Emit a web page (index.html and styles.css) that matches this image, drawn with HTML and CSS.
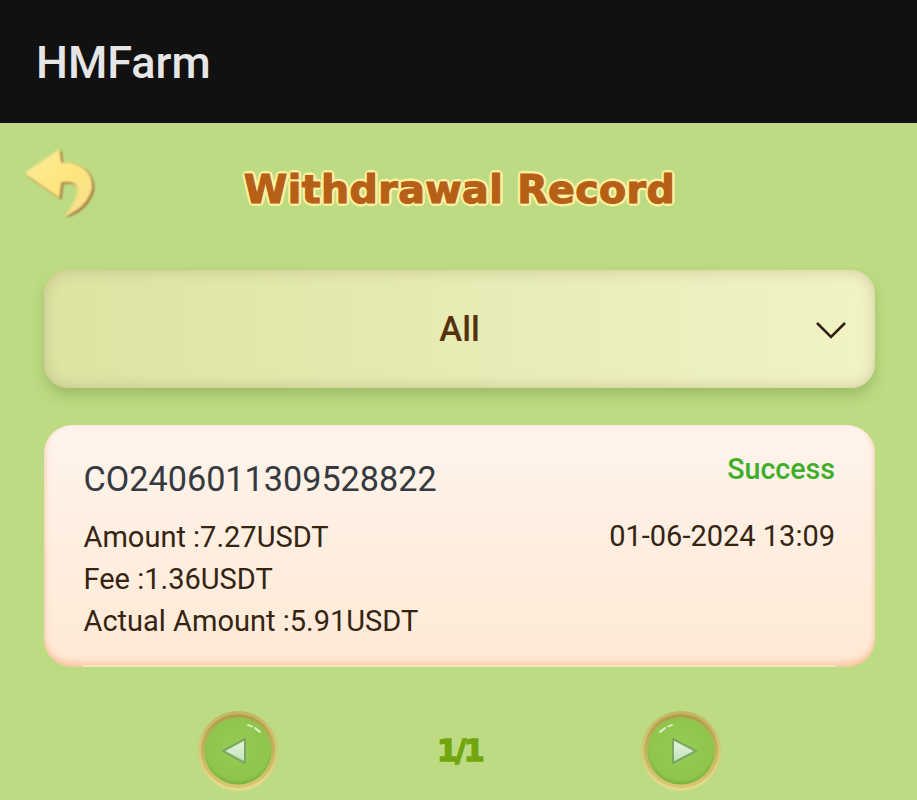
FILE: index.html
```html
<!DOCTYPE html>
<html lang="en">
<head>
<meta charset="utf-8">
<title>HMFarm</title>
<link rel="stylesheet" href="styles.css">
</head>
<body>
<header class="appbar">HMFarm</header>
<main class="page">
  <div class="title-row">
    <svg class="back" viewBox="0 0 72 74" aria-hidden="true">
      <defs>
        <linearGradient id="backFill" x1="0" y1="0" x2="0.8" y2="1">
          <stop offset="0" stop-color="#fdee9e"/>
          <stop offset="0.55" stop-color="#fee57e"/>
          <stop offset="1" stop-color="#f7e08c"/>
        </linearGradient>
        <filter id="soft"><feGaussianBlur stdDeviation="0.9"/></filter>
      </defs>
      <path d="M35 1 L1 24 Q0 26 2 28 L35 51 L37 35 Q50 33 53 40 Q54 52 40 69 Q62 62 68 42 Q70 22 50 16 Q44 14 37 15 Z" fill="#a2733f" transform="translate(2 1.5)" filter="url(#soft)"/>
      <path d="M35 1 L1 24 Q0 26 2 28 L35 51 L37 35 Q50 33 53 40 Q54 52 40 69 Q62 62 68 42 Q70 22 50 16 Q44 14 37 15 Z" fill="url(#backFill)" filter="url(#soft)"/>
    </svg>
    <h1 class="title">Withdrawal Record</h1>
  </div>

  <div class="select">
    <span class="select-label">All</span>
    <svg class="chevron" viewBox="0 0 32 20" aria-hidden="true">
      <path d="M2 3 L16 17 L30 3" fill="none" stroke="#33200f" stroke-width="2.6"/>
    </svg>
  </div>

  <section class="card">
    <div class="card-top">
      <div class="order-id">CO2406011309528822</div>
      <div class="status">Success</div>
    </div>
    <div class="card-bottom">
      <div class="details">
        <div>Amount :7.27USDT</div>
        <div>Fee :1.36USDT</div>
        <div>Actual Amount :5.91USDT</div>
      </div>
      <div class="date">01-06-2024 13:09</div>
    </div>
  </section>

  <nav class="pager">
    <svg class="page-btn" viewBox="0 0 80 80" aria-hidden="true">
      <defs>
        <linearGradient id="ringOuter" x1="0" y1="0" x2="0" y2="1">
          <stop offset="0" stop-color="#c4b562"/>
          <stop offset="1" stop-color="#e6dc8e"/>
        </linearGradient>
        <linearGradient id="ringInner" x1="0" y1="0" x2="0" y2="1">
          <stop offset="0" stop-color="#ad9f48"/>
          <stop offset="1" stop-color="#d8c96f"/>
        </linearGradient>
        <radialGradient id="ball" cx="0.5" cy="0.45" r="0.58">
          <stop offset="0" stop-color="#98ca55"/>
          <stop offset="0.82" stop-color="#8fc54c"/>
          <stop offset="1" stop-color="#6fa838"/>
        </radialGradient>
        <linearGradient id="tri" x1="0" y1="0" x2="0" y2="1">
          <stop offset="0" stop-color="#e8f4d8"/>
          <stop offset="1" stop-color="#bde2c0"/>
        </linearGradient>
      </defs>
      <circle cx="40" cy="40" r="40" fill="url(#ringOuter)"/>
      <circle cx="40" cy="40" r="37" fill="url(#ringInner)"/>
      <circle cx="40" cy="40" r="33.500" fill="url(#ball)"/>
      <path d="M47 28 L47 52 L25 40 Z" fill="url(#tri)" stroke="#7aa860" stroke-width="2" stroke-linejoin="round"/>
      <path d="M50 14 L54 15.500 M57 17 L62 21" stroke="#e6f2cf" stroke-width="1.800" stroke-linecap="round"/>
    </svg>
    <span class="page-count">1/1</span>
    <svg class="page-btn" viewBox="0 0 80 80" aria-hidden="true">
      <circle cx="40" cy="40" r="40" fill="url(#ringOuter)"/>
      <circle cx="40" cy="40" r="37" fill="url(#ringInner)"/>
      <circle cx="40" cy="40" r="33.500" fill="url(#ball)"/>
      <path d="M32 28 L55 40 L32 52 Z" fill="url(#tri)" stroke="#7aa860" stroke-width="2" stroke-linejoin="round"/>
      <path d="M31 14 L27 15.500 M24 17 L19 21" stroke="#e6f2cf" stroke-width="1.800" stroke-linecap="round"/>
    </svg>
  </nav>
</main>
</body>
</html>
```

FILE: styles.css
```css
* { box-sizing: border-box; }
html, body { margin: 0; height: 800px; overflow: hidden; }
body {
  background: #bcdb82;
  font-family: Roboto, "Liberation Sans", sans-serif;
}
.appbar {
  height: 123px;
  background: #111111;
  color: #e6e6e6;
  font-size: 45px;
  font-weight: 500;
  line-height: 126px;
  padding-left: 36px;
}
.page {
  padding: 0 42px 0 44px;
}
.title-row {
  position: relative;
  height: 147px;
  display: flex;
  justify-content: center;
  padding-top: 36px;
}
.back {
  position: absolute;
  left: -19px;
  top: 25px;
  width: 71px;
  height: 73px;
}
.title {
  margin: 0;
  font-family: "DejaVu Sans", sans-serif;
  font-size: 39.5px;
  font-weight: 700;
  line-height: 60px;
  height: 60px;
  letter-spacing: 0.4px;
  color: #b65f17;
  -webkit-text-stroke: 1.2px #b65f17;
  text-shadow: 3px 0 0 #fdf0a0, -3px 0 0 #fdf0a0, 0 3px 0 #fdf0a0, 0 -3px 0 #fdf0a0,
    2.1px 2.1px 0 #fdf0a0, -2.1px 2.1px 0 #fdf0a0, 2.1px -2.1px 0 #fdf0a0, -2.1px -2.1px 0 #fdf0a0;
}
.select {
  position: relative;
  height: 118px;
  border-radius: 24px;
  background: linear-gradient(90deg, #dde3a2 0%, #f2f3c6 100%);
  box-shadow: inset 0 0 14px rgba(170, 160, 110, 0.5), 0 8px 12px rgba(110, 140, 60, 0.35);
  display: flex;
  align-items: center;
  justify-content: center;
}
.select-label {
  color: #54320b;
  font-size: 34.5px;
  font-weight: 500;
  line-height: 114px;
}
.chevron {
  position: absolute;
  right: 28px;
  top: 50px;
  width: 32px;
  height: 20px;
}
.card {
  position: relative;
  margin-top: 37px;
  height: 242px;
  border-radius: 28px;
  background: linear-gradient(180deg, #fff4ec 0%, #ffe9d5 100%);
  box-shadow: inset 0 -5px 6px rgba(245, 175, 125, 0.55), inset 2px 0 3px rgba(245, 190, 150, 0.2), inset -2px 0 3px rgba(245, 190, 150, 0.2);
  padding: 24px 40px 0 39.5px;
}
.card::after {
  content: "";
  position: absolute;
  left: 39px;
  right: 39px;
  bottom: 0;
  height: 2px;
  background: #f5e2c0;
}
.card-top {
  display: flex;
  justify-content: space-between;
  align-items: flex-start;
}
.order-id {
  color: #343a40;
  font-size: 34.2px;
  line-height: 60px;
}
.status {
  color: #3fae2a;
  font-size: 28.6px;
  font-weight: 500;
  line-height: 40px;
}
.card-bottom {
  display: flex;
  justify-content: space-between;
  align-items: flex-start;
  color: #352411;
  font-size: 29px;
  line-height: 42px;
  margin-top: 7px;
}
.date {
  line-height: 40px;
}
.pager {
  margin-top: 44px;
  padding: 0 154px;
  display: flex;
  align-items: center;
  justify-content: space-between;
}
.page-btn {
  width: 80px;
  height: 80px;
}
.page-count {
  color: #73a60e;
  font-family: "DejaVu Sans", sans-serif;
  font-size: 30px;
  font-weight: 700;
  line-height: 76px;
  letter-spacing: -2.5px;
  -webkit-text-stroke: 1.5px #73a60e;
}
```
